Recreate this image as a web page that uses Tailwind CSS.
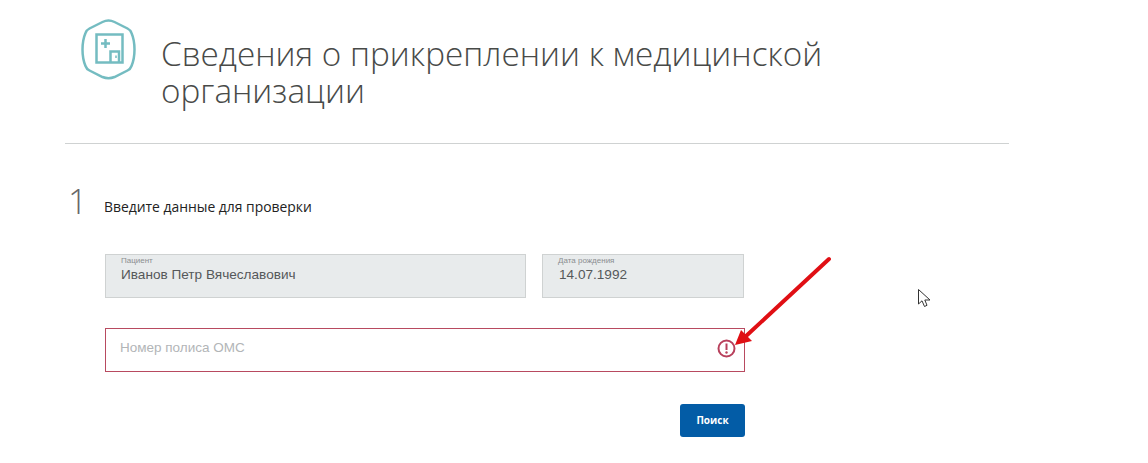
<!DOCTYPE html>
<html lang="ru">
<head>
<meta charset="utf-8">
<script src="https://cdn.jsdelivr.net/npm/@tailwindcss/browser@4"></script>
</head>
<body class="bg-white overflow-hidden font-['Liberation_Sans',sans-serif]">
<div class="relative w-[1148px] h-[463px] overflow-hidden pl-[65px]">
  <div class="w-[944px]">
    <header class="flex h-[144px] border-b border-[#cfd2d2] pl-[16px] pt-[19px]">
      <svg class="w-[55px] h-[61px] shrink-0" viewBox="0 0 55 61" fill="none" stroke="#74bcc1">
        <path d="M27.5 1.5 Q30.5 1.5 33.5 3 L46.5 9.5 Q49.5 11 50.5 14 Q53.5 21 53.5 30.5 Q53.5 40 50.5 47 Q49.5 50 46.5 51.5 L33.5 58 Q27.5 60.5 21.5 58 L8.5 51.5 Q5.5 50 4.5 47 Q1.5 40 1.5 30.5 Q1.5 21 4.5 14 Q5.5 11 8.5 9.5 L21.5 3 Q24.5 1.5 27.5 1.5 Z" stroke-width="2.5"/>
        <rect x="15.5" y="15.5" width="26" height="28" stroke-width="2.5"/>
        <path d="M20 24.5 H29 M24.5 20 V29" stroke-width="2.5"/>
        <path d="M29.5 43.5 V32.5 H38 V43.5" stroke-width="2.5"/>
        <path d="M35 36.5 V39" stroke-width="1.5"/>
      </svg>
      <h1 class="ml-[25px] mt-[16px] w-[700px] text-[33.3px] leading-[37px] font-extralight text-[#484a48] font-['Open_Sans',sans-serif]">Сведения о прикреплении к медицинской организации</h1>
    </header>
    <section class="flex items-center mt-[39px] h-[36px]">
      <span class="w-[39px] text-[34px] leading-[36px] font-extralight text-[#666] font-['Open_Sans',sans-serif] pl-[3px]">1</span>
      <h2 class="text-[13.9px] font-normal text-[#222] font-['Open_Sans',sans-serif] mt-[12px]">Введите данные для проверки</h2>
    </section>
    <div class="ml-[40px] mt-[35px] flex gap-[16px]">
      <div class="w-[421px] h-[44px] bg-[#e8ebec] border border-[#cfd2d2] pl-[15px] pt-[1px]">
        <div class="text-[8px] leading-[9px] text-[#8b8e90]">Пациент</div>
        <div class="text-[13.6px] leading-[20px] text-[#55585a]">Иванов Петр Вячеславович</div>
      </div>
      <div class="w-[202px] h-[44px] bg-[#e8ebec] border border-[#cfd2d2] pl-[15px] pt-[1px]">
        <div class="text-[8px] leading-[9px] text-[#8b8e90]">Дата рождения</div>
        <div class="text-[13.6px] leading-[20px] text-[#55585a] pl-[1px]">14.07.1992</div>
      </div>
    </div>
    <div class="ml-[40px] mt-[30px] w-[640px] h-[44px] border border-[#b84a60] flex items-center justify-between pl-[14px] pr-[8px] pb-[3px]">
      <span class="text-[13.5px] text-[#b2b5b7]">Номер полиса ОМС</span>
      <svg class="w-[19px] h-[19px]" viewBox="0 0 19 19" fill="none">
        <circle cx="9.5" cy="9.5" r="8" stroke="#b8405c" stroke-width="2"/>
        <path d="M9.5 4.5 V11" stroke="#b8405c" stroke-width="2"/>
        <circle cx="9.5" cy="13.5" r="1.2" fill="#b8405c"/>
      </svg>
    </div>
    <div class="ml-[40px] w-[640px] mt-[32px] flex justify-end">
      <button class="w-[65px] h-[33px] rounded-[3px] bg-[#035ca6] text-white text-[10px] font-bold font-['Open_Sans',sans-serif]">Поиск</button>
    </div>
  </div>
  <svg class="absolute left-[730px] top-[250px] w-[110px] h-[100px]" viewBox="0 0 110 100" fill="none">
    <path d="M99 9 L15 87" stroke="#e00f14" stroke-width="4" stroke-linecap="round"/>
    <path d="M5 95 L11 80 L22 91 Z" fill="#e00f14"/>
  </svg>
  <svg class="absolute left-[917px] top-[288px] w-[15px] h-[21px]" viewBox="0 0 15 21" fill="white" stroke="#333" stroke-width="1">
    <path d="M1.5 1.5 V16 L5 12.8 L7.5 18.5 L10 17.3 L7.8 12 H13 Z"/>
  </svg>
</div>
</body>
</html>
